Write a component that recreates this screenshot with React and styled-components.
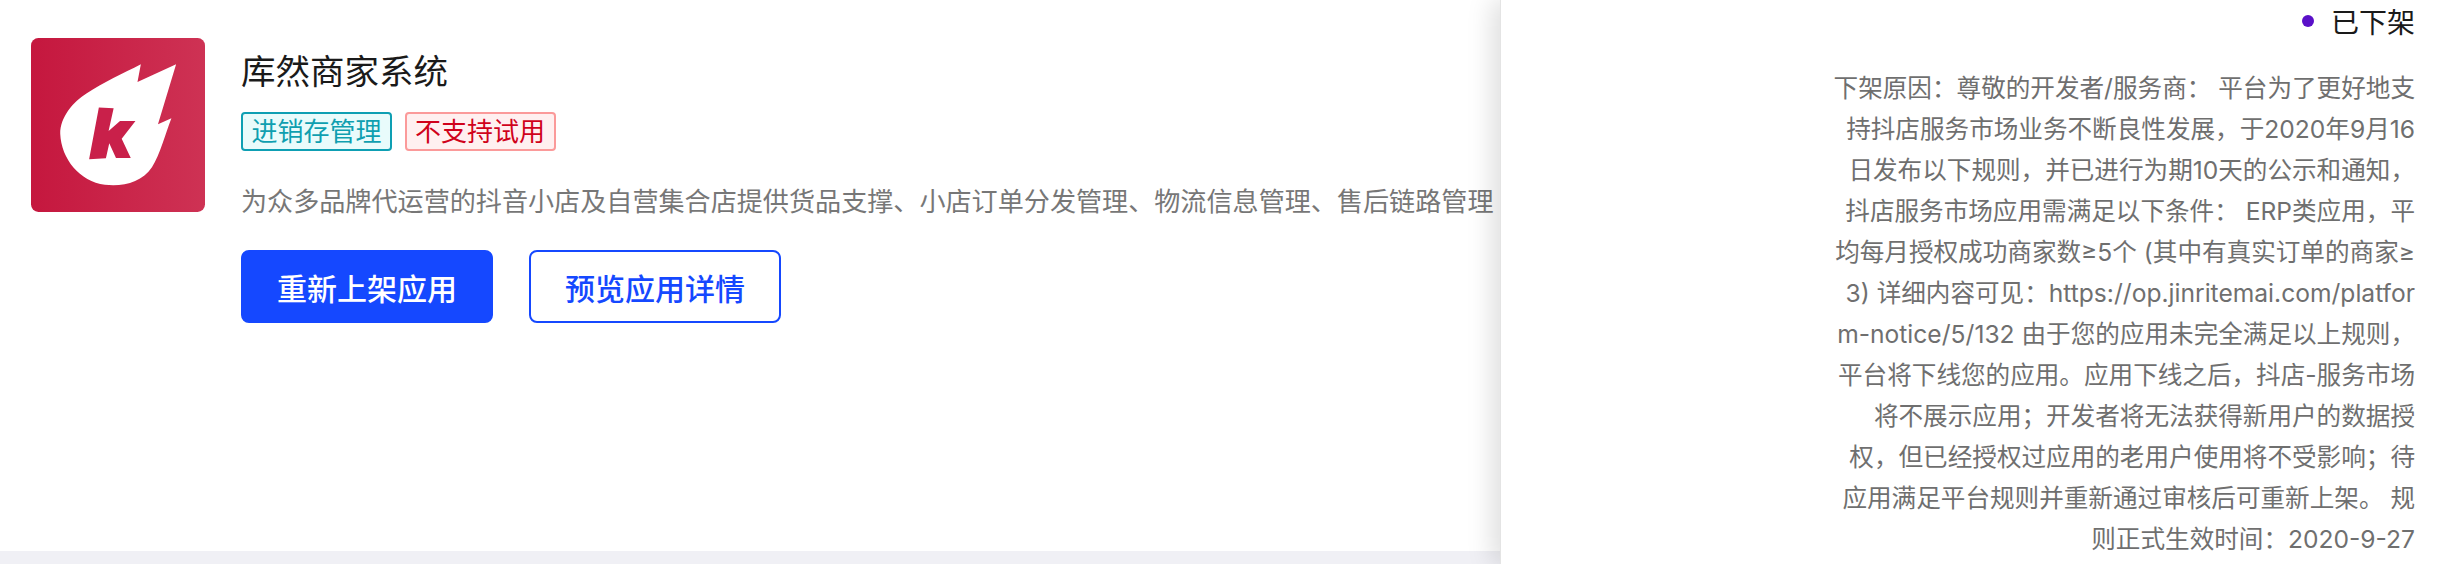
import React from "react";
import styled, { createGlobalStyle } from "styled-components";

const Global = createGlobalStyle`
  html, body { margin: 0; padding: 0; background: #fff; }
  body { font-family: "Liberation Sans", "Noto Sans CJK SC", sans-serif; overflow: hidden; }
`;

const Page = styled.div`
  position: relative;
  width: 2454px;
  height: 564px;
  overflow: hidden;
  display: flex;
  flex-direction: column;
`;
const Card = styled.section`
  flex: 0 0 551px;
  box-sizing: border-box;
  padding: 38px 0 0 31px;
  display: flex;
  gap: 36px;
  background: #fff;
`;
const Band = styled.div`
  flex: 1;
  background: #f0f0f5;
`;
const Logo = styled.svg`
  flex: 0 0 174px;
  width: 174px;
  height: 174px;
`;
const Info = styled.div`
  display: flex;
  flex-direction: column;
  padding-top: 14px;
  min-width: 0;
`;
const Title = styled.h1`
  margin: 0;
  font-size: 34.5px;
  line-height: 40px;
  font-weight: 400;
  color: #1a1a1a;
`;
const Tags = styled.div`
  display: flex;
  gap: 12.5px;
  margin-top: 20px;
`;
const Tag = styled.span`
  box-sizing: border-box;
  height: 39px;
  width: 151px;
  display: flex;
  align-items: center;
  justify-content: center;
  font-size: 26px;
  line-height: 1;
  border-radius: 4px;
  border: 2px solid ${(p) => (p.$tone === "red" ? "#fb9a9a" : "#0e9fb3")};
  background: ${(p) => (p.$tone === "red" ? "#fff0f0" : "#e9fbfb")};
  color: ${(p) => (p.$tone === "red" ? "#d0021b" : "#0f9fb0")};
`;
const Desc = styled.p`
  margin: 33px 0 0;
  font-size: 26.1px;
  line-height: 36px;
  color: #777;
  white-space: nowrap;
`;
const Actions = styled.div`
  display: flex;
  gap: 36px;
  margin-top: 30px;
`;
const Button = styled.button`
  box-sizing: border-box;
  width: 252px;
  height: 73px;
  font: inherit;
  font-size: 30px;
  font-weight: 500;
  border-radius: 8px;
  border: 2px solid #1548ff;
  background: ${(p) => (p.$primary ? "#1548ff" : "#fff")};
  color: ${(p) => (p.$primary ? "#fff" : "#1548ff")};
  padding: 0;
`;
const Drawer = styled.aside`
  position: absolute;
  top: 0;
  right: 0;
  bottom: 0;
  width: 954px;
  box-sizing: border-box;
  padding-right: 39px;
  background: #fff;
  box-shadow: -8px 0 24px rgba(0, 0, 0, 0.13);
  border-left: 1px solid #e4e4e4;
  display: flex;
  flex-direction: column;
  align-items: flex-end;
`;
const Status = styled.div`
  display: flex;
  align-items: center;
  gap: 17px;
  height: 42px;
  font-size: 28px;
  color: #1a1a1a;
`;
const Dot = styled.span`
  width: 12px;
  height: 12px;
  border-radius: 50%;
  background: #5a10c8;
`;
const Reason = styled.div`
  margin-top: 26px;
  font-family: Inter, "Noto Sans CJK SC", sans-serif;
  font-size: 24.6px;
  line-height: 41px;
  color: #6f6f6f;
  text-align: right;
`;
const Line = styled.div`
  white-space: nowrap;
`;

const C = "\uFF0C";
const K = "\uFF1A";
const S = "\uFF1B";
const lines = [
  `下架原因${K}尊敬的开发者/服务商${K} 平台为了更好地支`,
  `持抖店服务市场业务不断良性发展${C}于2020年9月16`,
  `日发布以下规则${C}并已进行为期10天的公示和通知${C}`,
  `抖店服务市场应用需满足以下条件${K} ERP类应用${C}平`,
  `均每月授权成功商家数≥5个 (其中有真实订单的商家≥`,
  `3) 详细内容可见${K}https://op.jinritemai.com/platfor`,
  `m-notice/5/132 由于您的应用未完全满足以上规则${C}`,
  `平台将下线您的应用。应用下线之后${C}抖店-服务市场`,
  `将不展示应用${S}开发者将无法获得新用户的数据授`,
  `权${C}但已经授权过应用的老用户使用将不受影响${S}待`,
  `应用满足平台规则并重新通过审核后可重新上架。 规`,
  `则正式生效时间${K}2020-9-27`,
];

export default function App() {
  return (
    <Page>
      <Global />
      <Card>
        <Logo viewBox="0 0 518 518" aria-label="logo">
          <defs>
            <linearGradient id="lg" x1="0" y1="0" x2="1" y2="0">
              <stop offset="0" stopColor="#c5173e" />
              <stop offset="1" stopColor="#ce3254" />
            </linearGradient>
          </defs>
          <rect width="518" height="518" rx="22" fill="url(#lg)" />
          <g transform="translate(-35 -25)">
            <path
              fill="#fff"
              d="M362 103 L352 156 L467 103 L413 282 L453 264 C435 310 420 370 395 410 C365 455 310 468 255 462 C180 452 125 385 122 310 C122 260 160 215 200 190 C250 157 310 130 362 103Z"
            />
            <path
              fill="#c9204a"
              d="M237 232 L281 234 L266 302 L300 272 L346 272 L305 325 L332 382 L288 382 L268 338 L258 383 L208 386Z"
            />
          </g>
        </Logo>
        <Info>
          <Title>库然商家系统</Title>
          <Tags>
            <Tag>进销存管理</Tag>
            <Tag $tone="red">不支持试用</Tag>
          </Tags>
          <Desc>为众多品牌代运营的抖音小店及自营集合店提供货品支撑、小店订单分发管理、物流信息管理、售后链路管理</Desc>
          <Actions>
            <Button $primary>重新上架应用</Button>
            <Button>预览应用详情</Button>
          </Actions>
        </Info>
      </Card>
      <Band />
      <Drawer>
        <Status>
          <Dot />
          已下架
        </Status>
        <Reason>
          {lines.map((l) => (
            <Line key={l}>{l}</Line>
          ))}
        </Reason>
      </Drawer>
    </Page>
  );
}
